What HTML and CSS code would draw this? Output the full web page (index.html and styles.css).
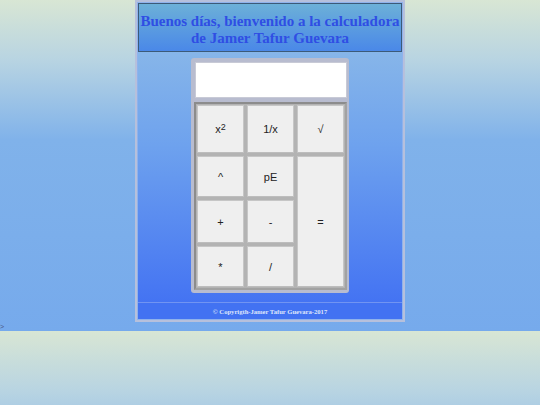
FILE: index.html
```html
<!DOCTYPE html>
<html lang="es">
<head>
<meta charset="utf-8">
<title>Calculadora</title>
<link rel="stylesheet" href="styles.css">
</head>
<body>
<div class="frame">
  <div class="inner">
    <header class="title">Buenos días, bienvenido a la calculadora<br>de Jamer Tafur Guevara</header>
    <main class="content">
      <div class="calc">
        <div class="display"></div>
        <div class="keys">
          <div class="key">x<sup>2</sup></div>
          <div class="key">1/x</div>
          <div class="key">√</div>
          <div class="key">^</div>
          <div class="key">pE</div>
          <div class="key eq">=</div>
          <div class="key">+</div>
          <div class="key">-</div>
          <div class="key">*</div>
          <div class="key">/</div>
        </div>
      </div>
    </main>
    <footer class="foot">© Copyrigth-Jamer Tafur Guevara-2017</footer>
  </div>
</div>
<div class="stray">&gt;</div>
</body>
</html>
```
FILE: styles.css
```css
html {
  background: linear-gradient(#d8e6d4 0, #b8d4e2 60px, #80b2ea 140px, #76aaec 331px);
  background-size: 100% 331px;
  background-repeat: repeat-y;
}
body {
  margin: 0;
  font-family: "Liberation Sans", Arial, sans-serif;
}
.frame {
  width: 266px;
  margin: 0 auto;
  border: 2px solid #b6c0dc;
  background: linear-gradient(#94c0e6, #6ea2ee 45%, #3f6ef3);
}
.inner {
  border: 1px solid #8fb2ec;
  display: flex;
  flex-direction: column;
}
.title {
  border: 1px solid #3c5a78;
  background: linear-gradient(#6cb0d8, #4a88e8);
  color: #2f4ee4;
  font-family: "Liberation Serif", "Times New Roman", serif;
  font-weight: bold;
  font-size: 15px;
  line-height: 17px;
  text-align: center;
  padding: 9px 0 4px;
}
.content {
  display: flex;
  justify-content: center;
  padding: 6px 0 9px;
}
.calc {
  width: 153px;
  background: #b8bccf;
  border-radius: 3px;
  padding: 4px 2px 3px 3px;
  display: flex;
  flex-direction: column;
  gap: 4px;
}
.display {
  height: 34px;
  width: 150px;
  margin-left: 1px;
  background: #fff;
  border: 1px solid #c8cad6;
}
.keys {
  display: grid;
  grid-template-columns: 47px 47px 47px;
  grid-template-rows: 48px 41px 43px 41px;
  gap: 3px;
  padding: 1px;
  background: #b3b3b3;
  border: 2px solid;
  border-color: #8c8c8c #a2a2a2 #a2a2a2 #8c8c8c;
}
.key {
  background: #efefef;
  border: 1px solid #c6c6c6;
  border-bottom-color: #bdbdbd;
  display: flex;
  align-items: center;
  justify-content: center;
  font-size: 11px;
  color: #222;
}
.key sup {
  font-size: 9px;
  line-height: 0;
  position: relative;
  top: -2px;
}
.eq {
  grid-column: 3;
  grid-row: 2 / span 3;
}
.foot {
  border-top: 1px solid #7194f2;
  background: #4272f2;
  color: #dfe6fb;
  font-family: "Liberation Serif", "Times New Roman", serif;
  font-weight: bold;
  font-size: 6.6px;
  height: 16px;
  display: flex;
  align-items: center;
  justify-content: center;
}
.stray {
  font-size: 7px;
  line-height: 9px;
  color: #4a5a88;
  height: 9px;
}
```
